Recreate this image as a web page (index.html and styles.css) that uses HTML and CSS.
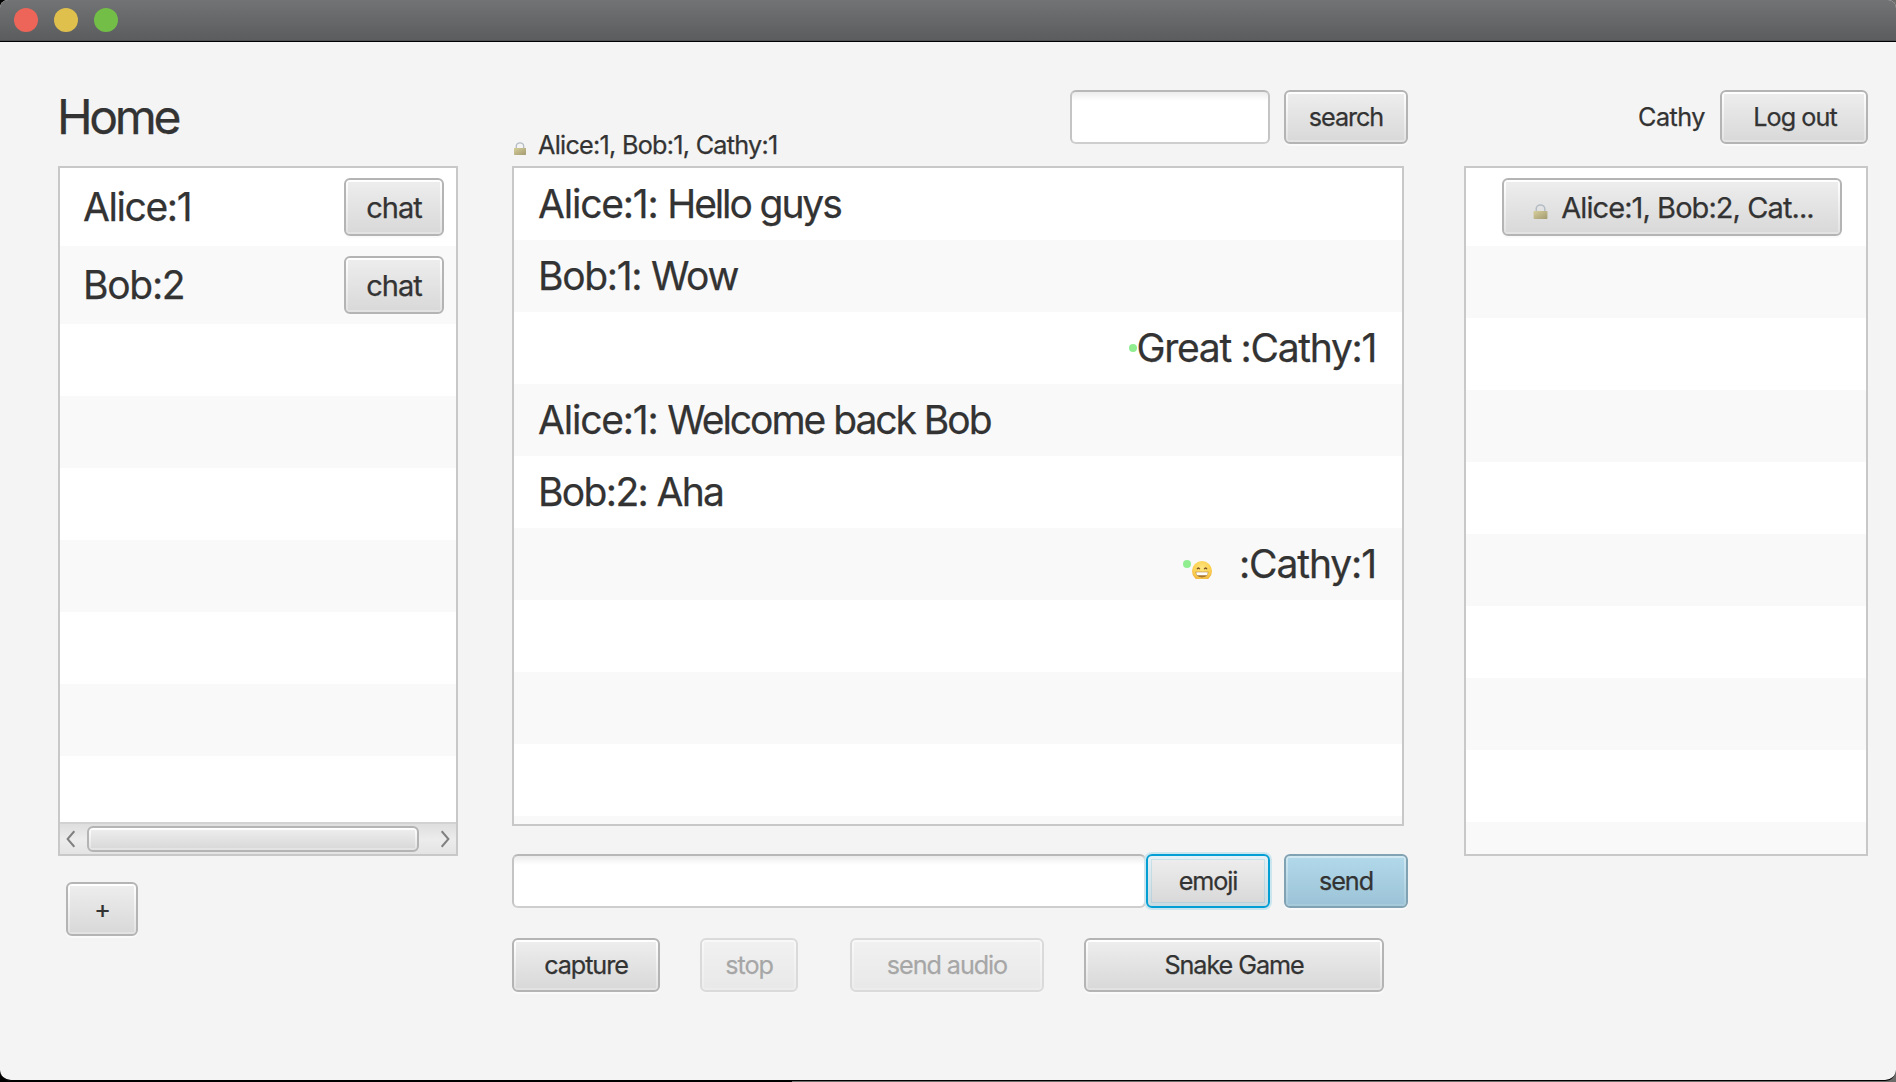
FILE: index.html
```html
<!DOCTYPE html>
<html lang="en">
<head>
<meta charset="utf-8">
<title>Chat</title>
<link rel="stylesheet" href="styles.css">
</head>
<body>
<svg class="defs" aria-hidden="true">
  <defs>
    <linearGradient id="brass" x1="0" x2="1" y1="0" y2="1">
      <stop offset="0" stop-color="#d6cf9a"/>
      <stop offset="1" stop-color="#a39a72"/>
    </linearGradient>
    <radialGradient id="face" cx=".5" cy=".35" r=".65">
      <stop offset="0" stop-color="#ffe680"/>
      <stop offset=".7" stop-color="#fbcf4e"/>
      <stop offset="1" stop-color="#eaa83a"/>
    </radialGradient>
    <symbol id="lock" viewBox="0 0 12 13">
      <path d="M2.3 6.5V4.2a3.7 3.4 0 0 1 7.4 0v2.3" fill="none" stroke="#b4bcc4" stroke-width="1.3"/>
      <path d="M0 6h12v6.2a.8.8 0 0 1-.8.8H.8a.8.8 0 0 1-.8-.8z" fill="url(#brass)"/>
    </symbol>
  </defs>
</svg>
<div class="window">
  <header class="titlebar">
    <span class="light red"></span>
    <span class="light yellow"></span>
    <span class="light green"></span>
  </header>
  <main class="content">
    <section class="column">
      <div class="head"><h1 class="home">Home</h1></div>
      <div class="list contacts">
        <div class="rows">
          <div class="row tall"><span class="alice">Alice:1</span><button class="btn chat">chat</button></div>
          <div class="row tall"><span class="bob">Bob:2</span><button class="btn chat">chat</button></div>
          <div class="row"></div><div class="row"></div><div class="row"></div><div class="row"></div>
          <div class="row"></div><div class="row"></div><div class="row"></div>
        </div>
        <div class="scrollbar">
          <svg class="arrow" viewBox="0 0 9 18"><path d="M8.3 1.2 1.6 9l6.700 7.800"/></svg>
          <span class="thumb"></span>
          <svg class="arrow" viewBox="0 0 9 18"><path d="M.7 1.2 7.400 9 .7 16.800"/></svg>
        </div>
      </div>
      <button class="btn add">+</button>
    </section>

    <section class="column">
      <div class="head">
        <div class="members"><svg class="lock"><use href="#lock"/></svg><span>Alice:1, Bob:1, Cathy:1</span></div>
        <input class="field search-field" type="text" aria-label="Search">
        <button class="btn search">search</button>
      </div>
      <div class="list messages">
        <div class="row"><span class="hello"><span class="from">Alice:1: </span>Hello guys</span></div>
        <div class="row"><span class="wow">Bob:1: Wow</span></div>
        <div class="row own"><i class="dot"></i><span class="great">Great :Cathy:1</span></div>
        <div class="row"><span class="welcome"><span class="from">Alice:1: </span>Welcome back Bob</span></div>
        <div class="row"><span class="aha">Bob:2: Aha</span></div>
        <div class="row own"><i class="dot high"></i>
          <svg class="smile" viewBox="0 0 20 18">
            <circle cx="10" cy="10" r="10" fill="url(#face)"/>
            <path d="M5 8.300q1.400-2.600 2.800 0M12.200 8.300q1.400-2.600 2.800 0" fill="none" stroke="#7a5224" stroke-width="1.300"/>
            <path d="M3.500 10.800h13q-.4 5.600-6.500 5.600t-6.500-5.600z" fill="#a8742f"/>
            <path d="M4.200 11.300h11.600q0 2.400-1 3H5.200q-1-.6-1-3z" fill="#fff"/>
          </svg>
          <span class="cathy">:Cathy:1</span></div>
        <div class="row"></div><div class="row"></div><div class="row"></div><div class="row"></div>
      </div>
      <div class="compose">
        <input class="field message-field" type="text" aria-label="Message">
        <button class="btn emoji">emoji</button>
        <button class="btn send">send</button>
      </div>
      <div class="actions">
        <button class="btn capture">capture</button>
        <button class="btn stop" disabled>stop</button>
        <button class="btn audio" disabled>send audio</button>
        <button class="btn snake">Snake Game</button>
      </div>
    </section>

    <section class="column">
      <div class="head account"><span class="user">Cathy</span><button class="btn logout">Log out</button></div>
      <div class="list rooms">
        <div class="row tall"><button class="btn room"><svg class="lock"><use href="#lock"/></svg><span>Alice:1, Bob:2, Cat...</span></button></div>
        <div class="row"></div><div class="row"></div><div class="row"></div><div class="row"></div><div class="row"></div>
        <div class="row"></div><div class="row"></div><div class="row"></div><div class="row"></div>
      </div>
    </section>
  </main>
</div>
</body>
</html>
```
FILE: styles.css
```css
* { box-sizing: border-box; }

body {
  margin: 0;
  height: 1082px;
  overflow: hidden;
  background: linear-gradient(90deg, #000 0 792px, #6b6b69 792px);
  color: #333;
  font: 400 25.2px Inter, "Liberation Sans", sans-serif;
  letter-spacing: -0.0425em;
  white-space: nowrap;
  -webkit-text-stroke: 0.25px currentColor;
}

.defs { position: absolute; width: 0; height: 0; }

.window {
  height: 1081px;
  border-bottom: 1px solid #000;
  border-radius: 8px 8px 11px 11px;
  background: #f4f4f4;
  overflow: hidden;
}

.titlebar {
  display: flex;
  gap: 16px;
  height: 42px;
  padding: 8px 14px;
  background: linear-gradient(#727375, #5b5c5e);
  border-bottom: 1px solid #000;
  box-shadow: inset 0 -1px #505152;
}
.light { width: 24px; height: 24px; border-radius: 50%; }
.red { background: #ed6559; }
.yellow { background: #e0c04c; }
.green { background: #72be47; }

.content {
  display: grid;
  grid-template-columns: 400px 896px 404px;
  column-gap: 54px;
  padding: 48px 28px 0 58px;
}
.column:last-child { margin-left: 2px; width: 404px; }

.head { display: flex; height: 76px; align-items: flex-start; }

.home {
  margin: -2px 0 0 -1px;
  font-size: 48px;
  font-weight: 400;
  line-height: 58px;
  letter-spacing: -0.069em;
}

/* Lists */
.list {
  display: flex;
  flex-direction: column;
  border: 2px solid #c8c8c8;
  background: #fff;
  overflow: hidden;
  font-size: 39px;
}
.contacts, .rooms { height: 690px; }
.messages { width: 892px; height: 660px; }
.rows { flex: 1; overflow: hidden; }
.row {
  display: flex;
  flex: none;
  align-items: center;
  height: 72px;
  padding: 0 27px 0 24px;
}
.row > span { padding-bottom: 1px; }
.row:nth-child(even) { background: #f9f9f9; }
.tall { height: 78px; }
.contacts .row { justify-content: space-between; padding: 0 12px 0 23px; }
.rooms .row { justify-content: flex-end; padding-right: 24px; }
.messages .own { justify-content: flex-end; padding-right: 26px; }

.alice { letter-spacing: -0.036em; }
.bob { letter-spacing: -0.033em; }
.from { letter-spacing: -0.031em; white-space: pre; }
.hello { letter-spacing: -0.054em; }
.wow { letter-spacing: -0.0335em; }
.welcome { letter-spacing: -0.052em; }
.aha { letter-spacing: -0.0425em; }
.great { letter-spacing: -0.0335em; }
.cathy { letter-spacing: -0.0285em; }

.dot { width: 8px; height: 8px; border-radius: 50%; background: #90ee90; }
.high { margin: 0 1px 0 0; }
.smile { width: 20px; height: 18px; margin: 12px 27px 0 0; }

/* Buttons */
.btn {
  display: flex;
  flex: none;
  align-items: center;
  justify-content: center;
  height: 54px;
  padding: 0;
  border: 2px solid #b4b4b4;
  border-radius: 6px;
  background:
    linear-gradient(#ededed, #d9d9d9) 2px 2px / calc(100% - 4px) calc(100% - 4px) no-repeat padding-box,
    linear-gradient(#fff, #e2e2e2) padding-box;
  box-shadow: 0 2px #fafafa;
  color: inherit;
  font: inherit;
  letter-spacing: inherit;
}
.btn:disabled { opacity: .4; }
.chat, .room { height: 58px; font-size: 29px; }
.chat { width: 100px; letter-spacing: -0.033em; }
.room { width: 340px; letter-spacing: -0.032em; gap: 13px; padding-left: 3px; }
.room .lock { width: 15px; height: 15px; margin-top: 9px; }
.add { width: 72px; margin: 26px 0 0 8px; }
.search, .emoji, .send { width: 124px; }
.logout { width: 148px; letter-spacing: -0.0368em; padding-left: 2px; }
.capture { width: 148px; }
.stop { width: 98px; margin-left: 40px; }
.audio { width: 194px; margin-left: 52px; }
.snake { width: 300px; margin-left: 40px; }
.emoji {
  border-color: #039ed3;
  background:
    linear-gradient(#ededed, #d9d9d9) 4px 4px / calc(100% - 8px) calc(100% - 8px) no-repeat padding-box,
    linear-gradient(#c9e2ea, #b9d1da) 3px 3px / calc(100% - 6px) calc(100% - 6px) no-repeat padding-box,
    linear-gradient(#e4f1f6, #cadbe1) padding-box;
  box-shadow: 0 0 0 2px #cbe6ef;
}
.send {
  margin-left: 14px;
  border-color: #80a2b2;
  background:
    linear-gradient(#b1d9ea, #9cc3d7) 2px 2px / calc(100% - 4px) calc(100% - 4px) no-repeat padding-box,
    linear-gradient(#d0e9f3, #a6cadb) padding-box;
}

/* Text fields */
.field {
  height: 54px;
  padding: 0 12px;
  border: 2px solid;
  border-color: #b8b8b8 #c4c4c4 #cecece;
  border-radius: 6px;
  background: linear-gradient(#ececec, #fff 9px);
  font: inherit;
  outline: none;
}
.search-field { width: 200px; margin: 0 14px 0 auto; }
.message-field { flex: 1; min-width: 0; }

.members {
  display: flex;
  align-items: flex-end;
  gap: 12px;
  height: 70px;
  padding-left: 2px;
  line-height: 30px;
  letter-spacing: -0.029em;
}
.members .lock { width: 12px; height: 13px; margin-bottom: 5px; }

.compose { display: flex; margin-top: 28px; }
.actions { display: flex; margin-top: 30px; }

.account { justify-content: flex-end; line-height: 54px; }
.user { margin-right: 15px; letter-spacing: -0.0199em; }

/* Horizontal scrollbar */
.scrollbar {
  display: flex;
  flex: none;
  align-items: center;
  height: 32px;
  padding: 0 6px;
  border-top: 2px solid #d2d2d2;
  background: linear-gradient(#dedede, #ececec 50%, #e4e4e4);
}
.thumb {
  width: 332px;
  height: 26px;
  margin: 0 22px 0 12px;
  border: 2px solid #b4b4b4;
  border-radius: 6px;
  background:
    linear-gradient(#ededed, #d9d9d9) 2px 2px / calc(100% - 4px) calc(100% - 4px) no-repeat padding-box,
    linear-gradient(#fff, #e2e2e2) padding-box;
}
.arrow { flex: none; width: 9px; height: 18px; fill: none; stroke: #808080; stroke-width: 2; }
```
